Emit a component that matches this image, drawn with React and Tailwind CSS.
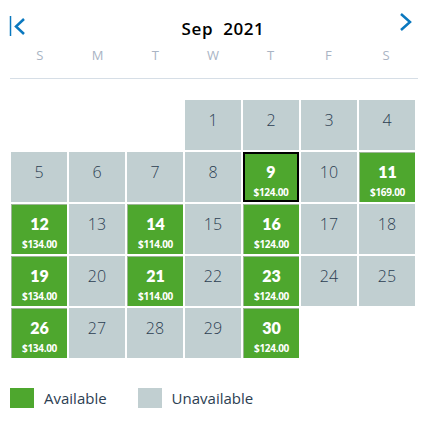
import React from "react";

const prices = {
  9: "$124.00",
  11: "$169.00",
  12: "$134.00",
  14: "$114.00",
  16: "$124.00",
  19: "$134.00",
  21: "$114.00",
  23: "$124.00",
  26: "$134.00",
  30: "$124.00",
};

const days = ["S", "M", "T", "W", "T", "F", "S"];

function DayCell({ day }) {
  const price = prices[day];
  if (!price) {
    return (
      <div className="h-[50px] bg-[#c1cfd1] flex justify-center pt-[8px] text-[16px] font-light text-[#2c3e52]">
        {day}
      </div>
    );
  }
  const selected = day === 9;
  return (
    <div
      className={
        selected
          ? "h-[50px] bg-[#4ea72e] border-2 border-black flex flex-col items-center pt-[8px] text-white"
          : "h-[50px] bg-[#4ea72e] border-l border-t border-[#9db597] flex flex-col items-center pt-[9px] text-white"
      }
    >
      <span className="text-[16px] font-extrabold leading-[20px]" style={{ fontFamily: "Lato, sans-serif" }}>{day}</span>
      <span className="mt-[3px] text-[10px] font-bold leading-[14px] -tracking-[0.3px]">{price}</span>
    </div>
  );
}

export default function App() {
  const cells = [null, null, null];
  for (let d = 1; d <= 30; d++) cells.push(d);

  return (
    <div className="w-[428px] h-[422px] bg-white" style={{ fontFamily: "'Open Sans', Lato, sans-serif" }}>
      <div className="relative h-[46px]">
        <button className="absolute left-[9px] top-[15px] flex items-center">
          <svg width="18" height="22" viewBox="0 0 18 22">
            <line x1="1.5" y1="1" x2="1.5" y2="21" stroke="#0a78bf" strokeWidth="1.5" />
            <polyline points="15,4 7,11.5 15,19" fill="none" stroke="#0a78bf" strokeWidth="2.5" />
          </svg>
        </button>
        <div className="absolute inset-x-0 top-[16px] pl-[18px] text-center text-[17px] font-semibold text-black whitespace-pre tracking-[0.6px]">
          Sep  2021
        </div>
        <button className="absolute right-[15px] top-[12px]">
          <svg width="14" height="20" viewBox="0 0 14 20">
            <polyline points="2,2 11,10 2,18" fill="none" stroke="#0a78bf" strokeWidth="2.5" />
          </svg>
        </button>
      </div>

      <div className="mx-[10px] border-b border-[#d6dee6] pb-[12px]">
        <div className="grid grid-cols-7 pl-[1px] pr-[3px]">
          {days.map((d, i) => (
            <div key={i} className="text-center text-[13px] text-[#a9b4c4]">
              {d}
            </div>
          ))}
        </div>
      </div>

      <div className="mt-[21px] ml-[11px] w-[404px] grid grid-cols-7 gap-[2px]">
        {cells.map((d, i) =>
          d ? <DayCell key={i} day={d} /> : <div key={i} className="h-[50px]" />
        )}
      </div>

      <div className="mt-[29px] ml-[10px] flex items-center">
        <div className="w-[24px] h-[20px] bg-[#4ea72e]" />
        <span className="ml-[10px] text-[15px] text-[#2c3e52]">Available</span>
        <div className="ml-[31px] w-[24px] h-[20px] bg-[#c1cfd1]" />
        <span className="ml-[10px] text-[15px] text-[#2c3e52]">Unavailable</span>
      </div>
    </div>
  );
}
